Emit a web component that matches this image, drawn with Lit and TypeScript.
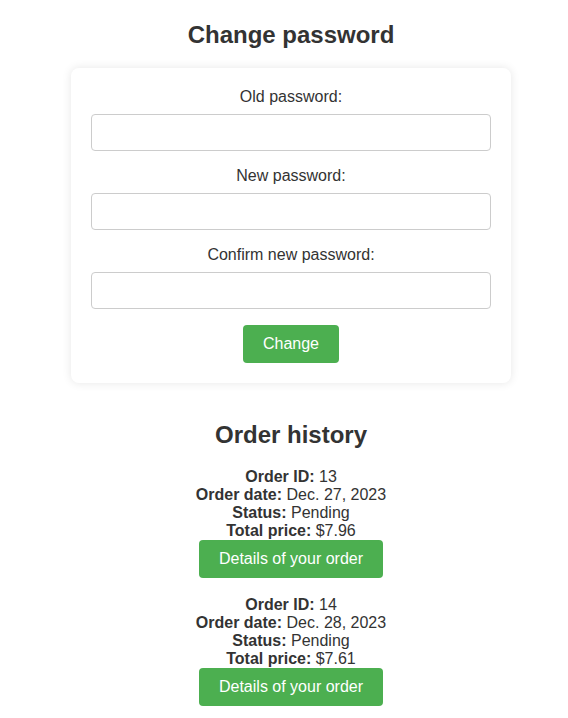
import { LitElement, html, css } from "lit";
import { customElement, property } from "lit/decorators.js";

interface Order {
  id: number;
  date: string;
  status: string;
  total: string;
}

const fields = [
  { id: "old-password", label: "Old password:" },
  { id: "new-password", label: "New password:" },
  { id: "confirm-password", label: "Confirm new password:" },
];

@customElement("app-root")
export class AppRoot extends LitElement {
  @property({ attribute: false })
  orders: Order[] = [
    { id: 13, date: "Dec. 27, 2023", status: "Pending", total: "$7.96" },
    { id: 14, date: "Dec. 28, 2023", status: "Pending", total: "$7.61" },
  ];

  static styles = css`
    :host {
      display: block;
      box-sizing: border-box;
      padding: 21px 0 12px 14px;
      background: #fff;
      color: #333;
      font: 16px/18px "Liberation Sans", Arial, sans-serif;
      text-align: center;
    }
    .title {
      margin: 0 0 20px;
      font-size: 24px;
      line-height: 27px;
    }
    .card {
      display: flex;
      flex-direction: column;
      align-items: center;
      gap: 16px;
      box-sizing: border-box;
      width: 100%;
      max-width: 440px;
      margin: 0 auto 38px;
      padding: 20px;
      border-radius: 8px;
      background: #fff;
      box-shadow: 0 0 10px rgba(0, 0, 0, 0.1);
    }
    .field {
      display: flex;
      flex-direction: column;
      gap: 8px;
      width: 100%;
    }
    .input {
      box-sizing: border-box;
      width: 100%;
      height: 37px;
      padding: 8px;
      border: 1px solid #ccc;
      border-radius: 4px;
      background: #fff;
      color: inherit;
      font: inherit;
    }
    .button {
      display: inline-block;
      padding: 10px 20px;
      border: 0;
      border-radius: 4px;
      background: #4caf50;
      color: #fff;
      font: inherit;
      text-decoration: none;
      cursor: pointer;
    }
    .orders {
      display: flex;
      flex-direction: column;
      gap: 18px;
      margin: 0;
      padding: 0;
      list-style: none;
    }
    .order {
      display: flex;
      flex-direction: column;
      align-items: center;
    }
  `;

  private submit(event: Event) {
    event.preventDefault();
  }

  render() {
    return html`
      <section>
        <h2 class="title">Change password</h2>
        <form class="card" @submit=${this.submit}>
          ${fields.map(
            (field) => html`
              <div class="field">
                <label for=${field.id}>${field.label}</label>
                <input class="input" type="password" id=${field.id} name=${field.id} />
              </div>
            `
          )}
          <button class="button" type="submit">Change</button>
        </form>
      </section>
      <section>
        <h2 class="title">Order history</h2>
        <ul class="orders">
          ${this.orders.map(
            (order) => html`
              <li class="order">
                <span><strong>Order ID:</strong> ${order.id}</span>
                <span><strong>Order date:</strong> ${order.date}</span>
                <span><strong>Status:</strong> ${order.status}</span>
                <span><strong>Total price:</strong> ${order.total}</span>
                <a class="button" href="#order-${order.id}">Details of your order</a>
              </li>
            `
          )}
        </ul>
      </section>
    `;
  }
}
